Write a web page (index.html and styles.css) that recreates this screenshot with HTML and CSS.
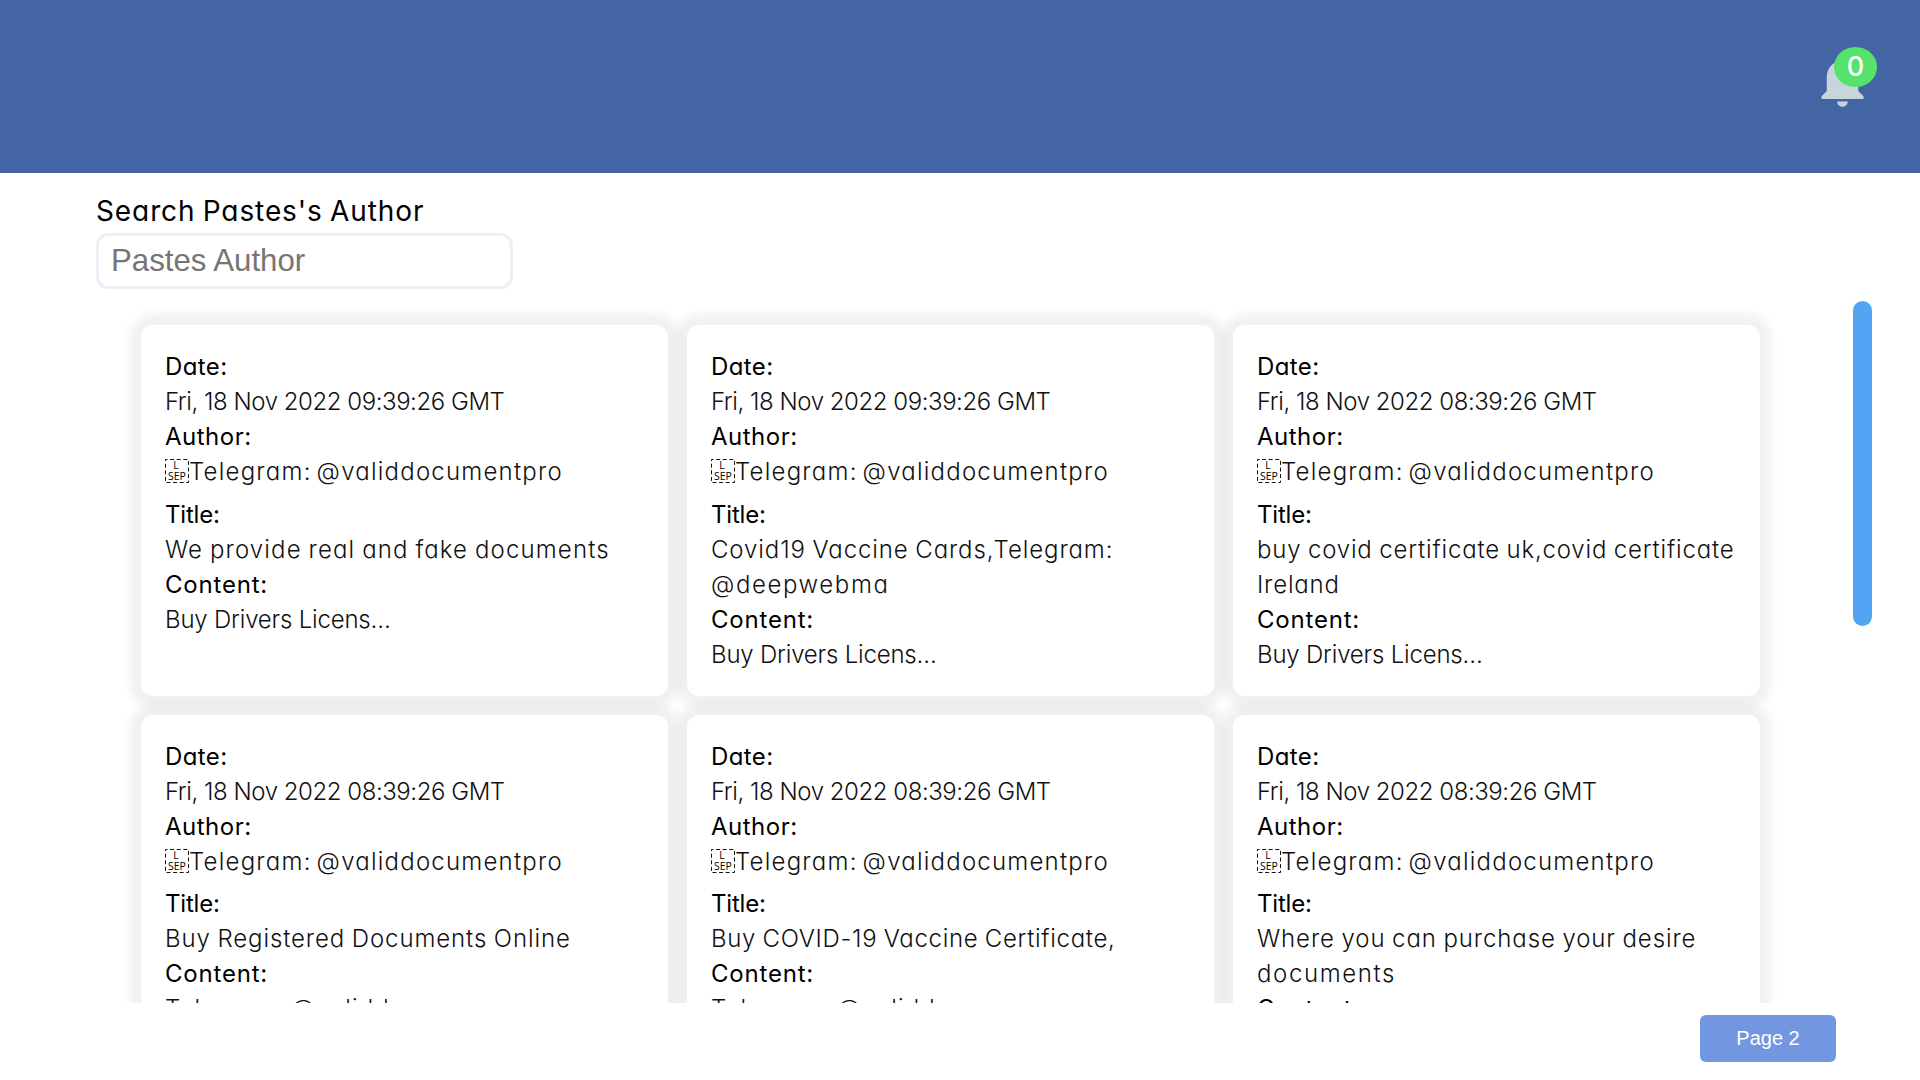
FILE: index.html
```html
<!DOCTYPE html>
<html lang="en">
<head>
<meta charset="utf-8">
<title>Pastes</title>
<link rel="stylesheet" href="styles.css">
</head>
<body>
<header class="topbar">
  <div class="notify">
    <svg class="bell" viewBox="0 0 24 24"><path d="M12 22c1.1 0 2-.9 2-2h-4c0 1.1.89 2 2 2zm6-6v-5c0-3.07-1.64-5.64-4.5-6.32V4c0-.83-.67-1.5-1.5-1.5s-1.5.67-1.5 1.5v.68C7.63 5.36 6 7.92 6 11v5l-2 2v1h16v-1l-2-2z"/></svg>
    <span class="badge">0</span>
  </div>
</header>
<section class="search">
  <label class="search-label" for="author">Search Pastes's Author</label>
  <input class="search-input" id="author" type="text" placeholder="Pastes Author">
</section>
<main class="list">
  <div class="grid">
    <article class="card">
      <h4 class="l-date">Date:</h4><p class="date">Fri, 18 Nov 2022 09:39:26 GMT</p>
      <h4 class="l-author">Author:</h4><p class="author"><svg class="lsep" viewBox="0 0 24 24"><rect x=".5" y=".5" width="23" height="23"/><text x="11" y="10">L</text><text x="12" y="21">SEP</text></svg>Telegram: @validdocumentpro</p>
      <h4 class="l-title">Title:</h4><p class="wide">We provide real and fake documents</p>
      <h4 class="l-content">Content:</h4><p class="content">Buy Drivers Licens…</p>
    </article>
    <article class="card">
      <h4 class="l-date">Date:</h4><p class="date">Fri, 18 Nov 2022 09:39:26 GMT</p>
      <h4 class="l-author">Author:</h4><p class="author"><svg class="lsep" viewBox="0 0 24 24"><rect x=".5" y=".5" width="23" height="23"/><text x="11" y="10">L</text><text x="12" y="21">SEP</text></svg>Telegram: @validdocumentpro</p>
      <h4 class="l-title">Title:</h4><p>Covid19 Vaccine Cards,Telegram: <span class="wider">@deepwebma</span></p>
      <h4 class="l-content">Content:</h4><p class="content">Buy Drivers Licens…</p>
    </article>
    <article class="card">
      <h4 class="l-date">Date:</h4><p class="date">Fri, 18 Nov 2022 08:39:26 GMT</p>
      <h4 class="l-author">Author:</h4><p class="author"><svg class="lsep" viewBox="0 0 24 24"><rect x=".5" y=".5" width="23" height="23"/><text x="11" y="10">L</text><text x="12" y="21">SEP</text></svg>Telegram: @validdocumentpro</p>
      <h4 class="l-title">Title:</h4><p class="snug">buy covid certificate uk,covid certificate Ireland</p>
      <h4 class="l-content">Content:</h4><p class="content">Buy Drivers Licens…</p>
    </article>
    <article class="card">
      <h4 class="l-date">Date:</h4><p class="date">Fri, 18 Nov 2022 08:39:26 GMT</p>
      <h4 class="l-author">Author:</h4><p class="author"><svg class="lsep" viewBox="0 0 24 24"><rect x=".5" y=".5" width="23" height="23"/><text x="11" y="10">L</text><text x="12" y="21">SEP</text></svg>Telegram: @validdocumentpro</p>
      <h4 class="l-title">Title:</h4><p>Buy Registered Documents Online</p>
      <h4 class="l-content">Content:</h4><p class="clipped">Telegram: @validdo…</p>
    </article>
    <article class="card">
      <h4 class="l-date">Date:</h4><p class="date">Fri, 18 Nov 2022 08:39:26 GMT</p>
      <h4 class="l-author">Author:</h4><p class="author"><svg class="lsep" viewBox="0 0 24 24"><rect x=".5" y=".5" width="23" height="23"/><text x="11" y="10">L</text><text x="12" y="21">SEP</text></svg>Telegram: @validdocumentpro</p>
      <h4 class="l-title">Title:</h4><p class="tight">Buy COVID-19 Vaccine Certificate,</p>
      <h4 class="l-content">Content:</h4><p class="clipped">Telegram: @validdo…</p>
    </article>
    <article class="card">
      <h4 class="l-date">Date:</h4><p class="date">Fri, 18 Nov 2022 08:39:26 GMT</p>
      <h4 class="l-author">Author:</h4><p class="author"><svg class="lsep" viewBox="0 0 24 24"><rect x=".5" y=".5" width="23" height="23"/><text x="11" y="10">L</text><text x="12" y="21">SEP</text></svg>Telegram: @validdocumentpro</p>
      <h4 class="l-title">Title:</h4><p>Where you can purchase your desire <span class="wider">documents</span></p>
      <h4 class="l-content">Content:</h4><p class="clipped">Telegram: @validdo…</p>
    </article>
  </div>
  <div class="track"><div class="thumb"></div></div>
</main>
<footer class="pager"><button class="page-btn" type="button">Page 2</button></footer>
</body>
</html>
```
FILE: styles.css
```css
* { box-sizing: border-box; margin: 0; padding: 0; }
body {
  display: flex;
  flex-direction: column;
  height: 1080px;
  overflow: hidden;
  background: #fff;
  color: #000;
  font: 300 24px/35px Inter, sans-serif;
  font-feature-settings: "cv11";
}
.topbar {
  flex: none;
  display: flex;
  justify-content: flex-end;
  height: 173px;
  padding: 49px 46.5px 0 0;
  background: #4465a4;
}
.notify { position: relative; width: 63px; height: 63px; }
.bell { display: block; width: 63px; height: 63px; fill: #c7d6dc; }
.badge {
  position: absolute;
  left: 23.5px;
  top: -2px;
  width: 43px;
  height: 40px;
  border-radius: 50%;
  background: #54e36b;
  color: #fff;
  font-size: 27px;
  font-weight: 500;
  line-height: 39px;
  text-align: center;
}
.search {
  flex: none;
  display: flex;
  flex-direction: column;
  height: 128px;
  padding: 17px 96px 0;
}
.search-label {
  height: 43px;
  font-size: 28px;
  font-weight: 430;
  line-height: 43px;
  letter-spacing: .9px;
  word-spacing: -1.5px;
}
.search-input {
  width: 417px;
  height: 56px;
  padding: 0 12px;
  border: 3px solid #ebf0f7;
  border-radius: 12px;
  font: 31.2px "Liberation Sans", Arial, sans-serif;
}
.search-input::placeholder { color: #757575; }
.list {
  flex: none;
  display: flex;
  justify-content: space-between;
  height: 702px;
  padding: 0 48px 0 129px;
  overflow: hidden;
}
.grid {
  display: grid;
  grid-template-columns: repeat(3, 527px);
  gap: 19px;
  align-content: start;
  padding: 24px 12px;
}
.card {
  padding: 24px 20px 24px 24px;
  border-radius: 12px;
  background: #fff;
  box-shadow: 0 0 10px 11px rgba(0, 0, 0, .058);
}
.card h4 { font-size: 24px; font-weight: 430; }
.card p { color: #111; letter-spacing: .9px; word-spacing: -1px; }
.card .l-date { letter-spacing: .4px; }
.card .l-author { letter-spacing: .5px; }
.card .l-title { letter-spacing: -.2px; }
.card .l-content { letter-spacing: .8px; }
.card .date { letter-spacing: -.45px; word-spacing: 0; }
.card .author { padding-bottom: 7.6px; letter-spacing: 1.22px; word-spacing: -3px; white-space: nowrap; }
.card .content { letter-spacing: -.2px; word-spacing: 0; }
.card .wide { letter-spacing: 1.13px; }
.card .clipped { letter-spacing: 1.1px; word-spacing: -3px; }
.card .snug { letter-spacing: .82px; }
.card .tight { letter-spacing: .68px; }
.card .wider { letter-spacing: 1.6px; }
.lsep {
  width: 24px;
  height: 24px;
  vertical-align: -3px;
  font: 400 10.5px "Open Sans", sans-serif;
  letter-spacing: 0;
  text-anchor: middle;
}
.lsep rect { fill: none; stroke: #111; stroke-dasharray: 4 2.6; stroke-dashoffset: 2; }
.track { width: 19px; }
.thumb { height: 325px; border-radius: 10px; background: #52a5f5; }
.pager { display: flex; justify-content: flex-end; padding: 12px 84px 0 0; }
.page-btn {
  width: 136px;
  height: 47px;
  border: 0;
  border-radius: 6px;
  background: #7296e0;
  color: #fff;
  font: 20px "Liberation Sans", Arial, sans-serif;
}
```
